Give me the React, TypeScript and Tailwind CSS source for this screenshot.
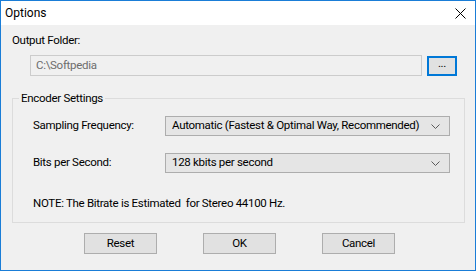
import React from 'react';

const font = { fontFamily: 'Roboto, "Noto Sans", "Liberation Sans", sans-serif' };

const Chevron = () => (
  <svg width="9" height="5" viewBox="0 0 9 5" className="shrink-0">
    <path d="M0.5 0.5 L4.5 4.5 L8.5 0.5" fill="none" stroke="#5a5a5a" strokeWidth="1" />
  </svg>
);

const Select = ({ value }: { value: string }) => (
  <div className="w-[285px] h-[20px] flex items-center justify-between pl-[6px] pr-[9px] bg-[#e5e5e5] border border-[#adadad] text-black">
    <span className="whitespace-nowrap leading-none">{value}</span>
    <Chevron />
  </div>
);

const Button = ({ label }: { label: string }) => (
  <div className="w-[73px] h-[21px] flex items-center justify-center bg-[#e1e1e1] border border-[#adadad] text-black leading-none">
    {label}
  </div>
);

export default function App() {
  return (
    <div
      className="w-[476px] h-[271px] flex flex-col border border-[#1a7dd7] bg-[#f0f0f0] text-[11.5px] tracking-[-0.3px] text-black overflow-hidden"
      style={font}
    >
      {/* title bar */}
      <div className="h-[24px] shrink-0 bg-white flex items-center justify-between pl-[4px] pr-[9px]">
        <span className="text-[12px] tracking-normal">Options</span>
        <svg width="11" height="11" viewBox="0 0 11 11">
          <path d="M0.5 0.5 L10.5 10.5 M10.5 0.5 L0.5 10.5" stroke="#000" strokeWidth="1" />
        </svg>
      </div>

      <div className="flex-1 flex flex-col pl-[11px] pr-[10px] pt-[7px]">
        <div className="leading-[16px]">Output Folder:</div>

        <div className="flex items-center gap-[5px] mt-[7px] ml-[18px]">
          <div className="w-[392px] h-[21px] flex items-center pl-[5px] bg-[#f0f0f0] border border-[#cccccc] text-[#6d6d6d]">
            C:\Softpedia
          </div>
          <div className="w-[30px] h-[20px] flex items-end justify-center pb-[4px] bg-[#e1e1e1] border-2 border-[#0078d7] leading-none">
            ...
          </div>
        </div>

        <fieldset className="mt-[14px] border border-[#dcdcdc] pl-[20px] pr-[14px] pt-[10px] pb-[11px]">
          <legend className="-ml-[14px] px-[2px] leading-[16px]">Encoder Settings</legend>
          <div className="flex items-center justify-between">
            <span>Sampling Frequency:</span>
            <Select value="Automatic (Fastest & Optimal Way, Recommended)" />
          </div>
          <div className="flex items-center justify-between mt-[17px]">
            <span>Bits per Second:</span>
            <Select value="128 kbits per second" />
          </div>
          <div className="mt-[22px] leading-[16px] whitespace-pre">NOTE: The Bitrate is Estimated  for Stereo 44100 Hz.</div>
        </fieldset>

        <div className="flex justify-center gap-[46px] mt-[10px] pl-[2px]">
          <Button label="Reset" />
          <Button label="OK" />
          <Button label="Cancel" />
        </div>
      </div>
    </div>
  );
}
